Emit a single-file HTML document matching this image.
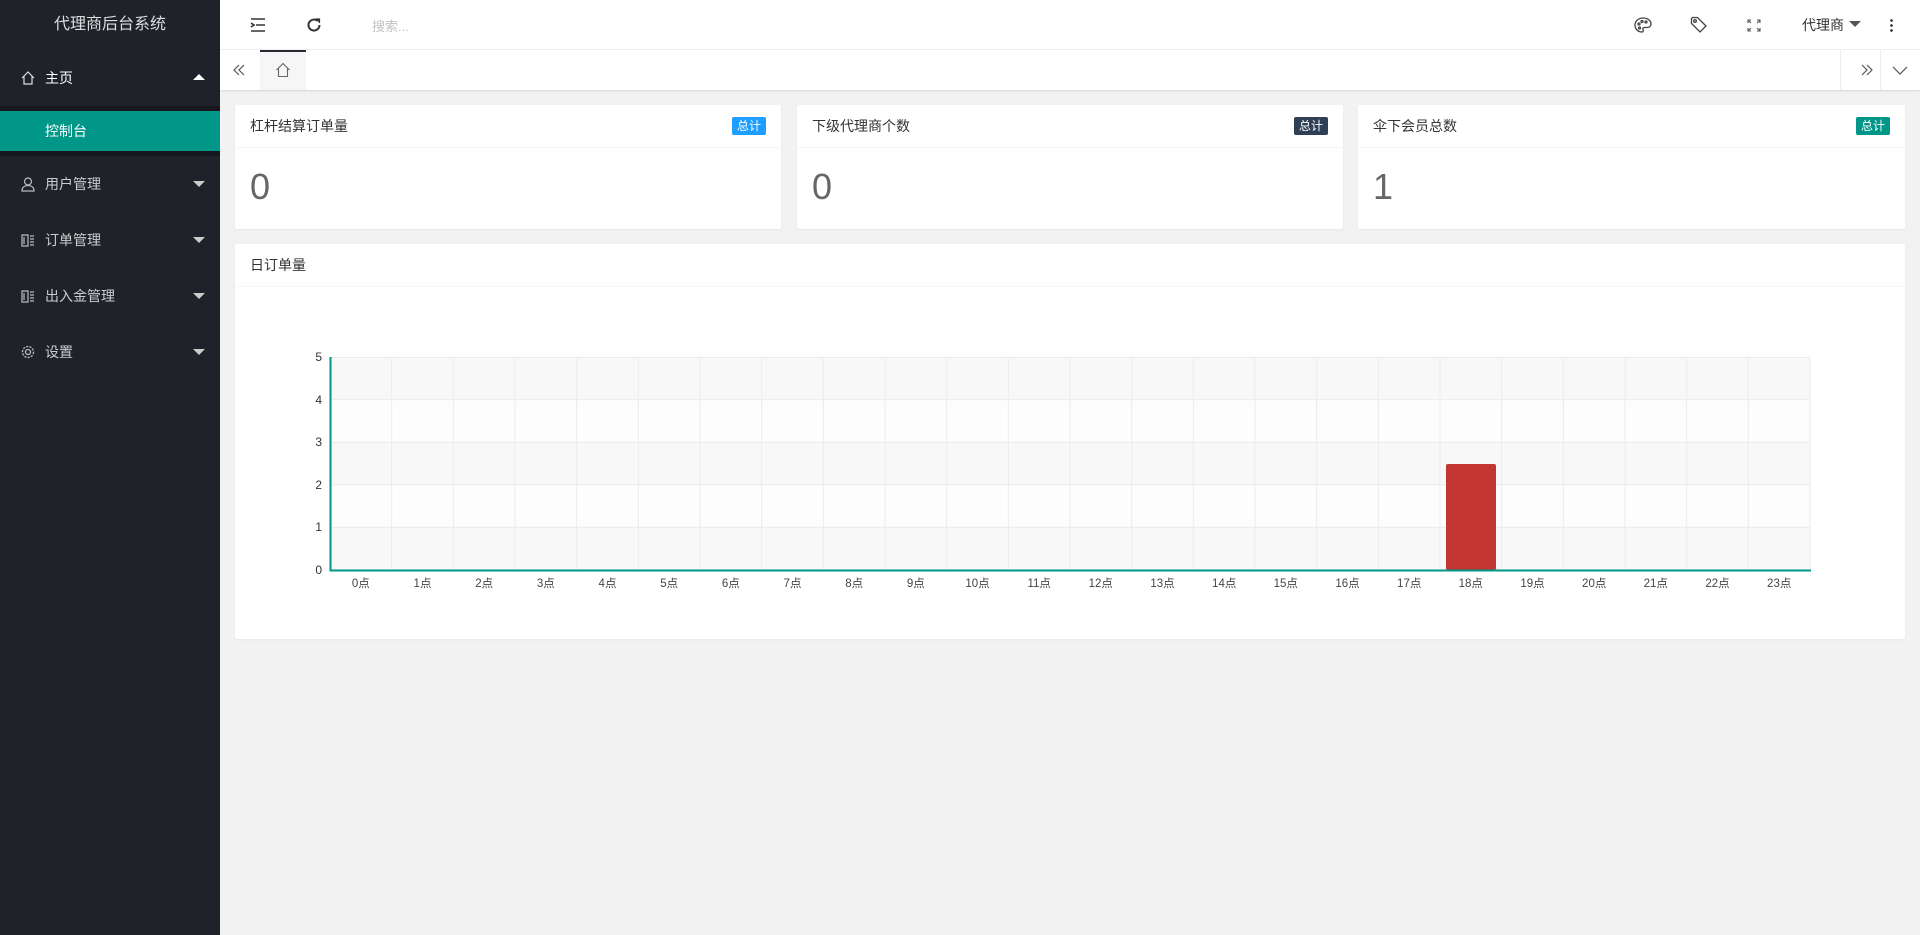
<!DOCTYPE html>
<html><head><meta charset="utf-8"><style>
*{margin:0;padding:0;box-sizing:border-box}
body{width:1920px;height:935px;overflow:hidden;background:#f2f2f2;font-family:"Liberation Sans","Noto Sans CJK SC",sans-serif;font-size:14px;color:#333;position:relative}
.side{position:absolute;left:0;top:0;width:220px;height:935px;background:#20222a}
.logo{height:50px;line-height:50px;text-align:center;color:#ddd;font-size:16px}
.mi{position:absolute;left:0;width:220px;height:56px;line-height:56px;color:#ccc;font-size:14px}
.mi .ic{position:absolute;left:20px;top:20px;width:16px;height:16px}
.mi .t{position:absolute;left:45px}
.mi .car{position:absolute;left:193px;top:25px;width:0;height:0;border-left:6px solid transparent;border-right:6px solid transparent;border-top:6px solid #ccc}
.mi .up{border-top:0;border-bottom:6px solid #fff;top:24px}
.top{position:absolute;left:220px;top:0;right:0;height:50px;background:#fff;border-bottom:1px solid #f0f0f0}
.tabs{position:absolute;left:220px;top:50px;right:0;height:40px;background:#fff;box-shadow:0 1px 2px rgba(0,0,0,.12)}
.card{position:absolute;background:#fff;border-radius:2px;box-shadow:0 1px 2px rgba(0,0,0,.05)}
.ch{height:43px;line-height:42px;padding-left:15px;border-bottom:1px solid #f6f6f6;color:#333;font-size:14px;position:relative}
.bd{position:absolute;right:15px;top:12px;height:18px;line-height:18px;padding:0 5px;color:#fff;font-size:12px;border-radius:2px}
.num{padding-left:15px;font-size:36px;color:#666;line-height:78px}
</style></head><body>
<div class="side">
<div class="logo">代理商后台系统</div>
<div class="mi" style="top:50px;color:#fff">
<svg class="ic" viewBox="0 0 16 16" fill="none" stroke="#ddd" stroke-width="1.2"><path d="M2 8 L8 2 L14 8 M4 6.5 V14 H12 V6.5"/></svg>
<span class="t">主页</span><i class="car up"></i></div>
<div style="position:absolute;top:106px;left:0;width:220px;height:50px;background:#17181d"></div>
<div style="position:absolute;top:111px;left:0;width:220px;height:40px;line-height:40px;background:#009688;color:#fff;padding-left:45px">控制台</div>
<div class="mi" style="top:156px"><svg class="ic" viewBox="0 0 16 16" fill="none" stroke="#bbb" stroke-width="1.2"><circle cx="8" cy="5.5" r="3.5"/><path d="M2 15c0-4 3-5.5 6-5.5s6 1.5 6 5.5z"/></svg><span class="t">用户管理</span><i class="car"></i></div>
<div class="mi" style="top:212px"><svg class="ic" viewBox="0 0 16 16" fill="none" stroke="#bbb" stroke-width="1.2"><path d="M2 3h6v11H2zM10 4h4M10 7h4M10 10h4M10 13h4M4 5v7"/></svg><span class="t">订单管理</span><i class="car"></i></div>
<div class="mi" style="top:268px"><svg class="ic" viewBox="0 0 16 16" fill="none" stroke="#bbb" stroke-width="1.2"><path d="M2 3h6v11H2zM10 4h4M10 7h4M10 10h4M10 13h4M4 5v7"/></svg><span class="t">出入金管理</span><i class="car"></i></div>
<div class="mi" style="top:324px"><svg class="ic" viewBox="0 0 16 16" fill="none" stroke="#bbb" stroke-width="1.3"><circle cx="8" cy="8" r="2.5"/><circle cx="8" cy="8" r="5.5" stroke-dasharray="2.2 1.2"/></svg><span class="t">设置</span><i class="car"></i></div>
</div>

<div class="top">
<svg style="position:absolute;left:30px;top:18px" width="16" height="14" viewBox="0 0 16 14" fill="none" stroke="#333" stroke-width="1.6"><path d="M1 1h14M6 7h9M1 13h14M1 5l3 2-3 2"/></svg>
<svg style="position:absolute;left:86px;top:17px" width="16" height="16" viewBox="0 0 16 16" fill="none" stroke="#333" stroke-width="2"><path d="M13.5 8A5.5 5.5 0 1 1 11.5 3.8"/><path d="M9.5 2h4v4" fill="#333" stroke-width="1.2"/></svg>
<span style="position:absolute;left:152px;top:16px;color:#c2c2c2;font-size:13px">搜索...</span>
<svg style="position:absolute;left:1414px;top:17px" width="18" height="16" viewBox="0 0 18 16" fill="none" stroke="#444" stroke-width="1.3"><path d="M9 1C4 1 1 4.5 1 8c0 4 3 7 7 7 1.5 0 1.5-1.5 1-2.5s0-2 1.5-2H13c2.5 0 4-1.5 4-3.5C17 3.5 13.5 1 9 1z"/><circle cx="5" cy="7" r="1"/><circle cx="8" cy="4.5" r="1"/><circle cx="12" cy="5" r="1"/><circle cx="5.5" cy="11" r="1"/></svg>
<svg style="position:absolute;left:1470px;top:16px" width="18" height="18" viewBox="0 0 18 18" fill="none" stroke="#444" stroke-width="1.3"><path d="M1.5 2.5v5l8.5 8.5 6-6L7.5 1.5h-5z"/><circle cx="5" cy="5" r="1.3"/></svg>
<svg style="position:absolute;left:1527px;top:19px" width="14" height="13" viewBox="0 0 14 13" fill="none" stroke="#555" stroke-width="1.1"><path d="M1 4V1h3M1 1l3 3M13 4V1h-3M13 1l-3 3M1 9v3h3M1 12l3-3M13 9v3h-3M13 12l-3-3"/></svg>
<span style="position:absolute;left:1582px;top:15px;font-size:14px;color:#333">代理商</span>
<i style="position:absolute;left:1629px;top:21px;border-left:6px solid transparent;border-right:6px solid transparent;border-top:6px solid #555"></i>
<span style="position:absolute;left:1670px;top:18px;width:3px;height:14px;background:radial-gradient(circle,#333 1.2px,transparent 1.5px) 0 0/3px 5px"></span>
</div>

<div class="tabs">
<svg style="position:absolute;left:12px;top:14px" width="14" height="12" viewBox="0 0 14 12" fill="none" stroke="#555" stroke-width="1.2"><path d="M7 1L2 6l5 5M12 1L7 6l5 5"/></svg>
<div style="position:absolute;left:40px;top:0;width:46px;height:40px;background:#f6f6f6;border-top:2px solid #292b34"></div>
<svg style="position:absolute;left:55px;top:12px" width="16" height="16" viewBox="0 0 16 16" fill="none" stroke="#666" stroke-width="1.1"><path d="M1.5 8L8 1.5 14.5 8M3.5 6.5V14.5h9V6.5"/></svg>
<div style="position:absolute;right:40px;top:0;width:40px;height:40px;border-left:1px solid #eee"></div>
<div style="position:absolute;right:0;top:0;width:40px;height:40px;border-left:1px solid #eee"></div>
<svg style="position:absolute;right:46px;top:14px" width="14" height="12" viewBox="0 0 14 12" fill="none" stroke="#555" stroke-width="1.2"><path d="M2 1l5 5-5 5M7 1l5 5-5 5"/></svg>
<svg style="position:absolute;right:12px;top:16px" width="16" height="9" viewBox="0 0 16 9" fill="none" stroke="#555" stroke-width="1.2"><path d="M1 1l7 7 7-7"/></svg>
</div>

<div class="card" style="left:235px;top:105px;width:546px;height:124px"><div class="ch">杠杆结算订单量<span class="bd" style="background:#1e9fff">总计</span></div><div class="num">0</div></div>
<div class="card" style="left:797px;top:105px;width:546px;height:124px"><div class="ch">下级代理商个数<span class="bd" style="background:#2f4056">总计</span></div><div class="num">0</div></div>
<div class="card" style="left:1358px;top:105px;width:547px;height:124px"><div class="ch">伞下会员总数<span class="bd" style="background:#009688">总计</span></div><div class="num">1</div></div>

<div class="card" style="left:235px;top:244px;width:1670px;height:395px"><div class="ch">日订单量</div></div>
<svg style="position:absolute;left:0;top:0" width="1920" height="935" font-family="Liberation Sans, Noto Sans CJK SC, sans-serif" font-size="12" fill="#333">
<rect x="330" y="357" width="1480" height="42.6" fill="#f8f8f8"/>
<rect x="330" y="399.6" width="1480" height="42.6" fill="#fdfdfd"/>
<rect x="330" y="442.2" width="1480" height="42.6" fill="#f8f8f8"/>
<rect x="330" y="484.8" width="1480" height="42.6" fill="#fdfdfd"/>
<rect x="330" y="527.4" width="1480" height="42.6" fill="#f8f8f8"/>
<g stroke="#ebebeb" stroke-width="1">
<path d="M330 357.5H1810M330 399.6H1810M330 442.2H1810M330 484.8H1810M330 527.4H1810"/>
<path d="M391.7 357V570M453.3 357V570M515 357V570M576.7 357V570M638.3 357V570M700 357V570M761.7 357V570M823.3 357V570M885 357V570M946.7 357V570M1008.3 357V570M1070 357V570M1131.7 357V570M1193.3 357V570M1255 357V570M1316.7 357V570M1378.3 357V570M1440 357V570M1501.7 357V570M1563.3 357V570M1625 357V570M1686.7 357V570M1748.3 357V570M1810 357V570"/>
</g>
<rect x="1446" y="464" width="50" height="106" rx="2" fill="#c23531"/>
<path d="M330.5 357V570.5H1811" stroke="#009688" stroke-width="2" fill="none"/>
<g text-anchor="end"><text x="322" y="361">5</text><text x="322" y="404">4</text><text x="322" y="446">3</text><text x="322" y="489">2</text><text x="322" y="531">1</text><text x="322" y="574">0</text></g>
<g text-anchor="middle" font-size="11.5" fill="#444">
<text x="360.8" y="587">0点</text><text x="422.5" y="587">1点</text><text x="484.2" y="587">2点</text><text x="545.8" y="587">3点</text><text x="607.5" y="587">4点</text><text x="669.2" y="587">5点</text><text x="730.8" y="587">6点</text><text x="792.5" y="587">7点</text><text x="854.2" y="587">8点</text><text x="915.8" y="587">9点</text><text x="977.5" y="587">10点</text><text x="1039.2" y="587">11点</text><text x="1100.8" y="587">12点</text><text x="1162.5" y="587">13点</text><text x="1224.2" y="587">14点</text><text x="1285.8" y="587">15点</text><text x="1347.5" y="587">16点</text><text x="1409.2" y="587">17点</text><text x="1470.8" y="587">18点</text><text x="1532.5" y="587">19点</text><text x="1594.2" y="587">20点</text><text x="1655.8" y="587">21点</text><text x="1717.5" y="587">22点</text><text x="1779.2" y="587">23点</text>
</g>
</svg>
</body></html>
